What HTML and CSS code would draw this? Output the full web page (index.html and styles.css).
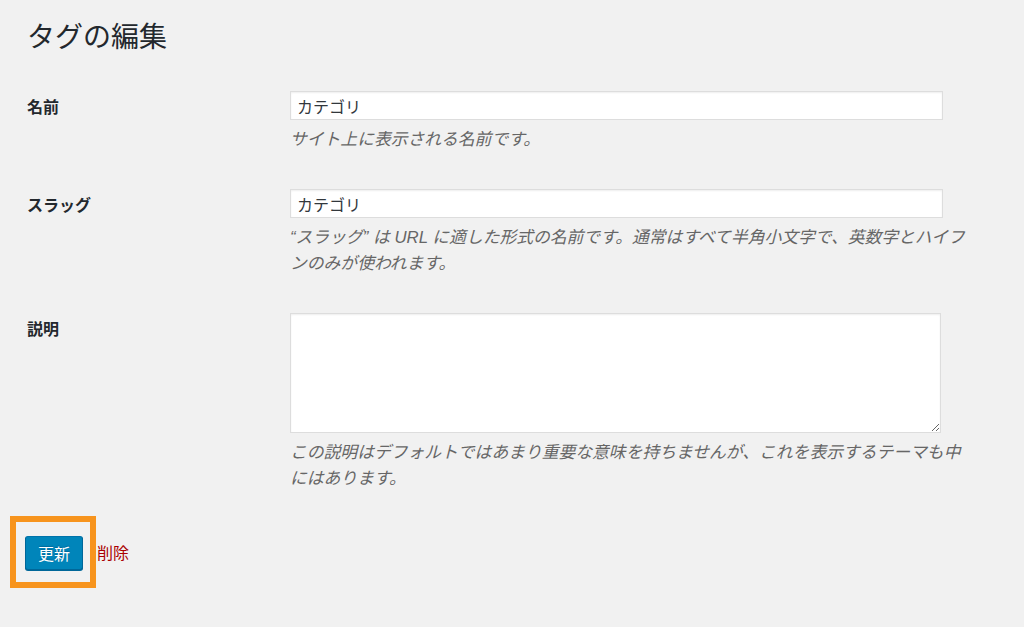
FILE: index.html
```html
<!DOCTYPE html>
<html lang="ja">
<head>
  <meta charset="UTF-8">
  <meta name="viewport" content="width=device-width, initial-scale=1.0">
  <title>タグの編集</title>
  <link rel="stylesheet" href="styles.css">
</head>
<body>
  <div class="wrap">
    <h1 class="page-title">タグの編集</h1>
    <form class="edit-tag">
      <div class="field">
        <label class="field-label" for="tag-name">名前</label>
        <div class="field-body">
          <input class="text-input" id="tag-name" type="text" value="カテゴリ">
          <p class="description">サイト上に表示される名前です。</p>
        </div>
      </div>
      <div class="field">
        <label class="field-label" for="tag-slug">スラッグ</label>
        <div class="field-body">
          <input class="text-input" id="tag-slug" type="text" value="カテゴリ">
          <p class="description">“スラッグ” は URL に適した形式の名前です。通常はすべて半角小文字で、英数字とハイフンのみが使われます。</p>
        </div>
      </div>
      <div class="field">
        <label class="field-label" for="tag-desc">説明</label>
        <div class="field-body">
          <textarea class="text-area" id="tag-desc"></textarea>
          <p class="description">この説明はデフォルトではあまり重要な意味を持ちませんが、これを表示するテーマも中にはあります。</p>
        </div>
      </div>
      <div class="submit">
        <button class="button-primary" type="button">更新</button>
        <a class="delete-link" href="javascript:;">削除</a>
        <span class="highlight"></span>
      </div>
    </form>
  </div>
</body>
</html>
```

FILE: styles.css
```css
* {
  margin: 0;
  padding: 0;
  box-sizing: border-box;
}
html, body {
  background-color: #f1f1f1;
}
body {
  font-family: "Liberation Sans", "Noto Sans CJK JP", sans-serif;
  color: #23282d;
  font-size: 16px;
  min-height: 627px;
}
.wrap {
  padding: 20px 0 60px 25px;
}
.page-title {
  font-size: 28px;
  font-weight: 400;
  line-height: 36px;
  padding-left: 2px;
  margin-bottom: 17px;
}
.field {
  display: grid;
  grid-template-columns: 265px 687px;
  padding: 18px 0;
}
.field-label {
  padding: 6px 0 0 2px;
  font-weight: 700;
  font-size: 16px;
  line-height: 22px;
}
.text-input {
  display: block;
  width: 95%;
  height: 29px;
  padding: 0 6px;
  border: 1px solid #dddddd;
  box-shadow: inset 0 1px 2px rgba(0, 0, 0, 0.07);
  background-color: #fff;
  color: #32373c;
  font-family: "Liberation Sans", "Noto Sans CJK JP", sans-serif;
  font-size: 16px;
  outline: none;
}
.text-area {
  display: block;
  width: 651px;
  height: 120px;
  border: 1px solid #dddddd;
  box-shadow: inset 0 1px 2px rgba(0, 0, 0, 0.07);
  background-color: #fff;
  font-family: "Liberation Sans", "Noto Sans CJK JP", sans-serif;
  font-size: 16px;
  outline: none;
}
.description {
  margin-top: 7px;
  font-size: 16.8px;
  line-height: 26px;
  font-style: italic;
  color: #666666;
}
.submit {
  position: relative;
  display: flex;
  align-items: center;
  gap: 14px;
  padding-top: 26px;
}
.button-primary {
  width: 58px;
  height: 34px;
  background-color: #0085ba;
  border: 1px solid #0073aa;
  border-color: #0073aa #006799 #006799;
  border-radius: 3px;
  box-shadow: 0 1px 0 #006799;
  color: #fff;
  text-shadow: 0 -1px 1px #006799;
  font-family: "Liberation Sans", "Noto Sans CJK JP", sans-serif;
  font-size: 16px;
}
.delete-link {
  color: #a00;
  text-decoration: none;
  font-size: 16px;
  margin-top: -2px;
}
.highlight {
  position: absolute;
  left: -15px;
  top: 6px;
  width: 86px;
  height: 72px;
  border: 6px solid #f7941d;
}
```
